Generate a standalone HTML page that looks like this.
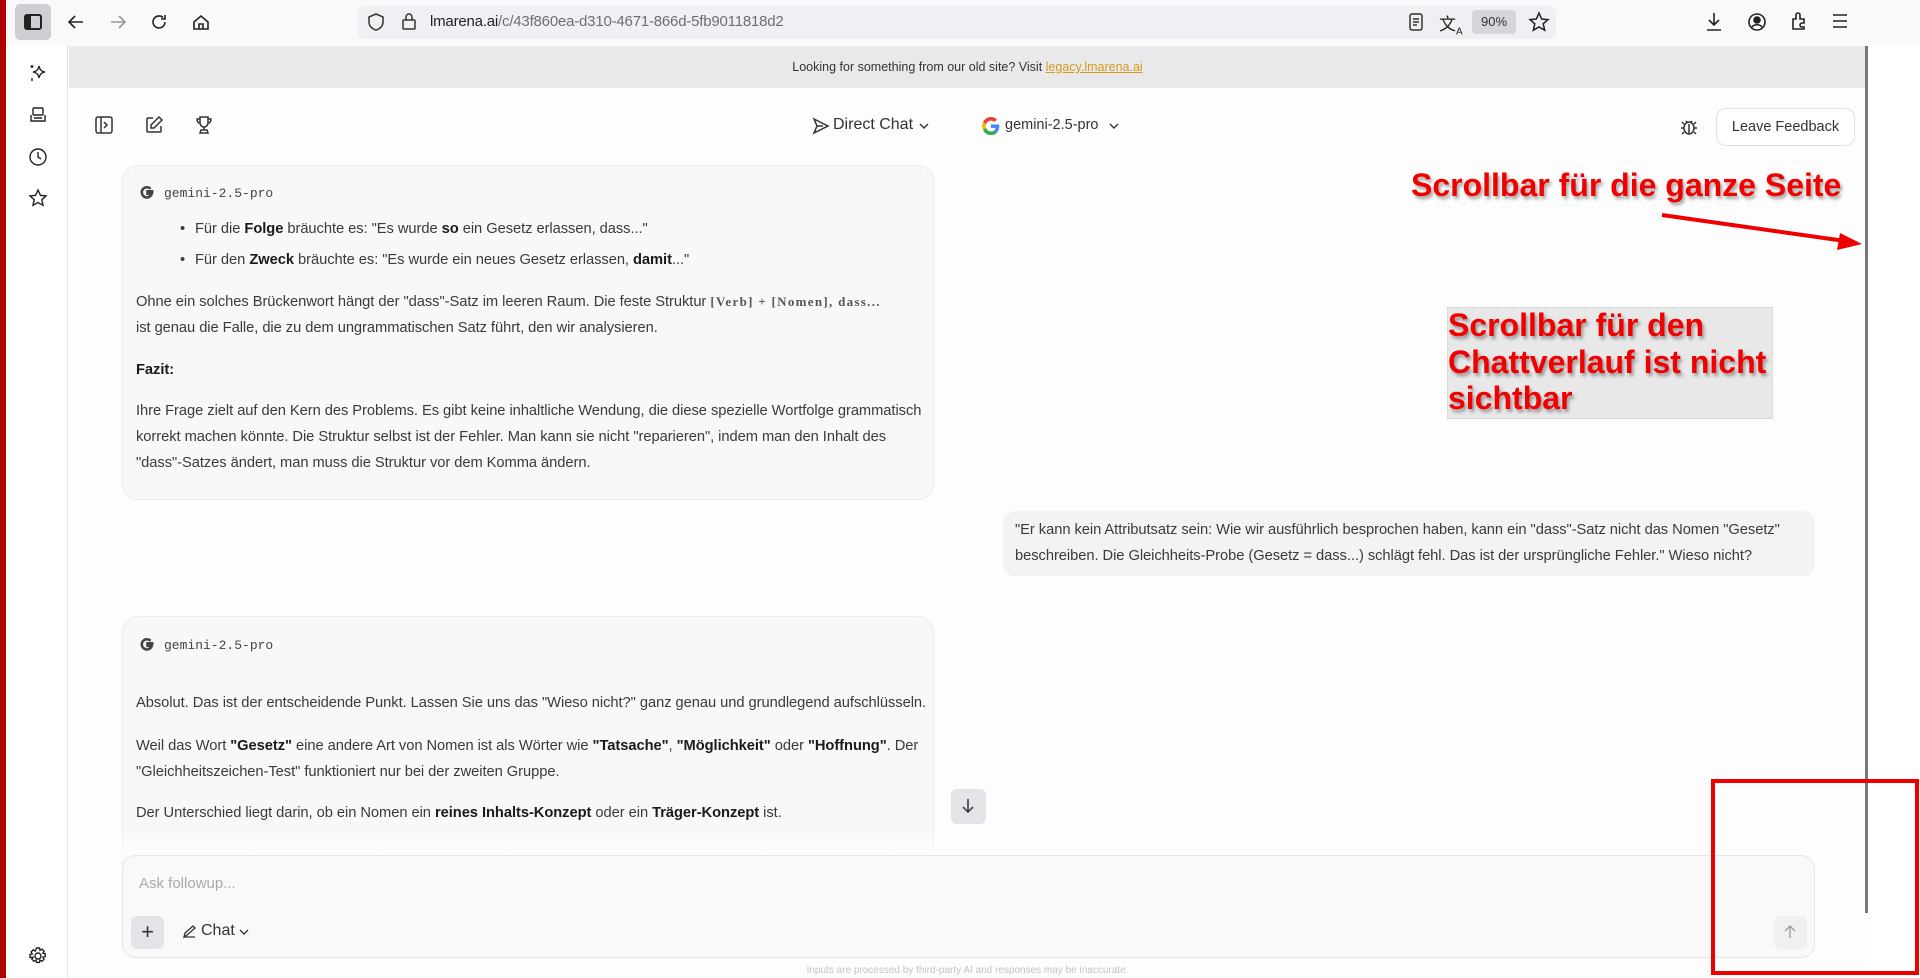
<!DOCTYPE html>
<html><head><meta charset="utf-8"><style>
*{box-sizing:border-box;margin:0;padding:0}
body{width:1920px;height:978px;overflow:hidden;background:#fff;font-family:"Liberation Sans",Arial,sans-serif;color:#333;position:relative}
.abs{position:absolute}
.tb{left:0;top:0;width:1920px;height:45px;background:#f9f9fb}
.addr{left:358px;top:6px;width:1198px;height:33px;background:#f0f0f4;border-radius:6px}
.url{left:430px;top:13px;font-size:15px;color:#222;letter-spacing:-.2px}
.url span{color:#6d6d75}
.red{left:0;top:0;width:6px;height:978px;background:#b00000}
.side{left:6px;top:45px;width:62px;height:933px;background:#fff;border-right:1px solid #e3e3e3}
.main{left:69px;top:46px;width:1797px;height:932px;background:#fdfdfd}
.banner{left:69px;top:46px;width:1797px;height:42px;background:#e9e9eb;font-size:12.5px;text-align:center;line-height:42px;color:#333}
.banner a{color:#d99a1a;text-decoration:underline}
.card{background:#f8f8f9;border:1px solid #ececee;border-radius:16px}
.txt{font-size:14.7px;line-height:26px;color:#3a3a3a;letter-spacing:-.05px}
.txt b{color:#1a1a1a}
.mono{font-family:"Liberation Mono",monospace;font-size:13px;color:#444}
.code{font-family:"Liberation Serif",serif;font-weight:bold;font-size:13px;color:#555;letter-spacing:1.3px}
.ann{color:#f20000;font-weight:bold;font-size:32px;text-shadow:2px 3px 3px rgba(0,0,0,.35);white-space:nowrap}
svg{position:absolute;overflow:visible}
</style></head><body>
<div class="abs tb"></div>
<div class="abs" style="left:15px;top:4px;width:36px;height:36px;background:#cfcfd3;border-radius:5px"></div>
<svg style="left:22px;top:11px" width="22" height="22" viewBox="0 0 22 22"><rect x="3" y="4" width="16" height="14" rx="2" fill="none" stroke="#222" stroke-width="2"/><rect x="4" y="5" width="5" height="12" fill="#222"/></svg>
<svg style="left:66px;top:12px" width="20" height="20" viewBox="0 0 20 20" fill="none" stroke="#222" stroke-width="1.6"><path d="M17 10H3M9 4l-6 6 6 6"/></svg>
<svg style="left:108px;top:12px" width="20" height="20" viewBox="0 0 20 20" fill="none" stroke="#999" stroke-width="1.6"><path d="M3 10h14M11 4l6 6-6 6"/></svg>
<svg style="left:149px;top:12px" width="20" height="20" viewBox="0 0 20 20" fill="none" stroke="#222" stroke-width="1.6"><path d="M16 10a6 6 0 1 1-2-4.5M16 3v4h-4"/></svg>
<svg style="left:191px;top:12px" width="20" height="20" viewBox="0 0 20 20" fill="none" stroke="#222" stroke-width="1.6"><path d="M3 10l7-6 7 6v7H3zM8 17v-5h4v5"/></svg>
<div class="abs addr"></div>
<svg style="left:367px;top:12px" width="18" height="20" viewBox="0 0 18 20" fill="none" stroke="#333" stroke-width="1.5"><path d="M9 2l7 3v5c0 4-3 7-7 8-4-1-7-4-7-8V5z"/></svg>
<svg style="left:401px;top:11px" width="16" height="20" viewBox="0 0 16 20" fill="none" stroke="#333" stroke-width="1.5"><rect x="2" y="9" width="12" height="9" rx="1"/><path d="M5 9V6a3 3 0 0 1 6 0v3"/></svg>
<div class="abs url">lmarena.ai<span>/c/43f860ea-d310-4671-866d-5fb9011818d2</span></div>
<svg style="left:1407px;top:12px" width="18" height="20" viewBox="0 0 18 20" fill="none" stroke="#333" stroke-width="1.5"><rect x="3" y="2" width="12" height="16" rx="2"/><path d="M6 7h6M6 10h6M6 13h4"/></svg>
<div class="abs" style="left:1439px;top:10px;font-size:17px;color:#222">文<sub style="font-size:10px">A</sub></div>
<div class="abs" style="left:1472px;top:10px;width:44px;height:24px;background:#d6d6da;border-radius:4px;font-size:13px;line-height:24px;text-align:center;color:#333">90%</div>
<svg style="left:1528px;top:11px" width="22" height="22" viewBox="0 0 22 22" fill="none" stroke="#222" stroke-width="1.5"><path d="M11 2l2.7 6 6.3.6-4.8 4.2 1.5 6.4L11 16l-5.7 3.2 1.5-6.4L2 8.6 8.3 8z"/></svg>
<svg style="left:1704px;top:11px" width="20" height="22" viewBox="0 0 20 22" fill="none" stroke="#222" stroke-width="1.6"><path d="M10 2v12M5 9l5 5 5-5M3 19h14"/></svg>
<svg style="left:1746px;top:11px" width="22" height="22" viewBox="0 0 22 22" fill="none" stroke="#222" stroke-width="1.6"><circle cx="11" cy="11" r="8"/><circle cx="11" cy="9" r="3" fill="#222"/><path d="M6 16c2-3 8-3 10 0"/></svg>
<svg style="left:1789px;top:10px" width="20" height="22" viewBox="0 0 20 22" fill="none" stroke="#222" stroke-width="1.6"><path d="M4 19V9h3V5a2 2 0 0 1 4 0v4h4v4h-2a2 2 0 0 0 0 4h2v2z"/></svg>
<svg style="left:1831px;top:13px" width="18" height="16" viewBox="0 0 18 16" fill="none" stroke="#222" stroke-width="1.6"><path d="M2 2h14M2 8h14M2 14h14"/></svg>

<div class="abs red"></div>
<div class="abs side"></div>
<svg style="left:28px;top:63px" width="20" height="20" viewBox="0 0 20 20" fill="none" stroke="#222" stroke-width="1.4"><path d="M11 3c1 4 2 5 6 6-4 1-5 2-6 6-1-4-2-5-6-6 4-1 5-2 6-6zM4 2v3M2.5 3.5h3M4 15v3"/></svg>
<svg style="left:28px;top:105px" width="20" height="20" viewBox="0 0 20 20" fill="none" stroke="#222" stroke-width="1.4"><rect x="5" y="3" width="10" height="7" rx="1"/><path d="M3 10v6h14v-6M6 13h8"/></svg>
<svg style="left:28px;top:147px" width="20" height="20" viewBox="0 0 20 20" fill="none" stroke="#222" stroke-width="1.4"><circle cx="10" cy="10" r="8"/><path d="M10 5v5l3 2"/></svg>
<svg style="left:28px;top:188px" width="20" height="20" viewBox="0 0 20 20" fill="none" stroke="#222" stroke-width="1.4"><path d="M10 2l2.4 5.3 5.6.6-4.2 3.8 1.2 5.6L10 14.5l-5 2.8 1.2-5.6L2 7.9l5.6-.6z"/></svg>
<svg style="left:28px;top:946px" width="20" height="20" viewBox="0 0 20 20" fill="none" stroke="#222" stroke-width="1.4"><circle cx="10" cy="10" r="3"/><path d="M8.5 2h3l.5 2.3 2-1.2 2.1 2.1-1.2 2 2.3.5v3l-2.3.5 1.2 2-2.1 2.1-2-1.2-.5 2.3h-3l-.5-2.3-2 1.2-2.1-2.1 1.2-2L2 11.5v-3l2.3-.5-1.2-2 2.1-2.1 2 1.2z"/></svg>

<div class="abs main"></div>
<div class="abs banner">Looking for something from our old site? Visit <a>legacy.lmarena.ai</a></div>

<svg style="left:94px;top:115px" width="20" height="20" viewBox="0 0 20 20" fill="none" stroke="#333" stroke-width="1.5"><rect x="2" y="2" width="16" height="16" rx="2"/><path d="M7 2v16M10 7l3 3-3 3"/></svg>
<svg style="left:144px;top:115px" width="20" height="20" viewBox="0 0 20 20" fill="none" stroke="#333" stroke-width="1.5"><path d="M9 3H4a1 1 0 0 0-1 1v12a1 1 0 0 0 1 1h12a1 1 0 0 0 1-1v-5M15 2l3 3-8 8H7v-3z"/></svg>
<svg style="left:194px;top:115px" width="20" height="20" viewBox="0 0 20 20" fill="none" stroke="#333" stroke-width="1.5"><path d="M6 2h8v6a4 4 0 0 1-8 0zM6 4H3c0 3 1 4 3 4M14 4h3c0 3-1 4-3 4M10 12v3M6 18h8l-1-3H7z"/></svg>
<svg style="left:812px;top:117px" width="18" height="18" viewBox="0 0 18 18" fill="none" stroke="#333" stroke-width="1.5"><path d="M2 2l14 7-14 7 3-7zM5 9h6"/></svg>
<div class="abs" style="left:833px;top:116px;font-size:16px;color:#333">Direct Chat</div>
<svg style="left:918px;top:121px" width="12" height="10" viewBox="0 0 12 10" fill="none" stroke="#333" stroke-width="1.4"><path d="M2 3l4 4 4-4"/></svg>
<svg style="left:982px;top:117px" width="18" height="18" viewBox="0 0 48 48"><path fill="#EA4335" d="M24 9.5c3.5 0 6.6 1.2 9.1 3.6l6.8-6.8C35.8 2.4 30.3 0 24 0 14.6 0 6.6 5.4 2.7 13.3l7.9 6.1C12.5 13.6 17.8 9.5 24 9.5z"/><path fill="#4285F4" d="M46.1 24.5c0-1.6-.1-3.1-.4-4.5H24v9h12.4c-.5 2.9-2.2 5.4-4.6 7l7.4 5.8c4.3-4 6.9-9.9 6.9-17.3z"/><path fill="#FBBC05" d="M10.5 28.6c-.5-1.4-.8-3-.8-4.6s.3-3.2.8-4.6l-7.9-6.1C1 16.6 0 20.2 0 24s.9 7.4 2.6 10.7z"/><path fill="#34A853" d="M24 48c6.5 0 11.9-2.1 15.9-5.8l-7.4-5.8c-2.1 1.4-4.8 2.300-8.5 2.3-6.2 0-11.5-4.2-13.4-9.9l-7.9 6.1C6.6 42.6 14.6 48 24 48z"/></svg>
<div class="abs" style="left:1005px;top:117px;font-size:14.5px;color:#333">gemini-2.5-pro</div>
<svg style="left:1108px;top:121px" width="12" height="10" viewBox="0 0 12 10" fill="none" stroke="#333" stroke-width="1.4"><path d="M2 3l4 4 4-4"/></svg>
<svg style="left:1679px;top:116px" width="20" height="20" viewBox="0 0 20 20" fill="none" stroke="#333" stroke-width="1.5"><ellipse cx="10" cy="12" rx="5" ry="6"/><path d="M7 5l1.5 2M13 5l-1.5 2M10 8v10M5 12H2M18 12h-3M5 8L3 6M15 8l2-2M5 16l-2 2M15 16l2 2"/></svg>
<div class="abs" style="left:1716px;top:108px;width:139px;height:38px;border:1px solid #e2e2e4;border-radius:10px;background:#fff;font-size:14.5px;line-height:36px;text-align:center;color:#333">Leave Feedback</div>

<!-- card 1 -->
<div class="abs card" style="left:122px;top:165px;width:812px;height:335px"></div>
<svg style="left:139px;top:184px" width="17" height="18" viewBox="0 0 20 20" fill="none" stroke="#444" stroke-width="3"><path d="M17 8H10v3h5a6 6 0 1 1-1.5-6"/></svg>
<div class="abs mono" style="left:164px;top:186px">gemini-2.5-pro</div>
<div class="abs txt" style="left:180px;top:216px">•</div>
<div class="abs txt" style="left:195px;top:216px">Für die <b>Folge</b> bräuchte es: "Es wurde <b>so</b> ein Gesetz erlassen, dass..."</div>
<div class="abs txt" style="left:180px;top:247px">•</div>
<div class="abs txt" style="left:195px;top:247px">Für den <b>Zweck</b> bräuchte es: "Es wurde ein neues Gesetz erlassen, <b>damit</b>..."</div>
<div class="abs txt" style="left:136px;top:289px;white-space:nowrap">Ohne ein solches Brückenwort hängt der "dass"-Satz im leeren Raum. Die feste Struktur <span class="code">[Verb] + [Nomen], dass...</span></div>
<div class="abs txt" style="left:136px;top:315px">ist genau die Falle, die zu dem ungrammatischen Satz führt, den wir analysieren.</div>
<div class="abs txt" style="left:136px;top:357px"><b>Fazit:</b></div>
<div class="abs txt" style="left:136px;top:398px;white-space:nowrap">Ihre Frage zielt auf den Kern des Problems. Es gibt keine inhaltliche Wendung, die diese spezielle Wortfolge grammatisch<br>korrekt machen könnte. Die Struktur selbst ist der Fehler. Man kann sie nicht "reparieren", indem man den Inhalt des<br>"dass"-Satzes ändert, man muss die Struktur vor dem Komma ändern.</div>

<!-- user msg -->
<div class="abs" style="left:1003px;top:511px;width:812px;height:65px;background:#f3f3f4;border-radius:12px"></div>
<div class="abs txt" style="left:1015px;top:517px;white-space:nowrap">"Er kann kein Attributsatz sein: Wie wir ausführlich besprochen haben, kann ein "dass"-Satz nicht das Nomen "Gesetz"<br>beschreiben. Die Gleichheits-Probe (Gesetz = dass...) schlägt fehl. Das ist der ursprüngliche Fehler." Wieso nicht?</div>

<!-- card 2 -->
<div class="abs card" style="left:122px;top:616px;width:812px;height:330px;border-bottom:none;border-radius:16px 16px 0 0"></div>
<svg style="left:139px;top:636px" width="17" height="18" viewBox="0 0 20 20" fill="none" stroke="#444" stroke-width="3"><path d="M17 8H10v3h5a6 6 0 1 1-1.5-6"/></svg>
<div class="abs mono" style="left:164px;top:638px">gemini-2.5-pro</div>
<div class="abs txt" style="left:136px;top:690px">Absolut. Das ist der entscheidende Punkt. Lassen Sie uns das "Wieso nicht?" ganz genau und grundlegend aufschlüsseln.</div>
<div class="abs txt" style="left:136px;top:733px;white-space:nowrap">Weil das Wort <b>"Gesetz"</b> eine andere Art von Nomen ist als Wörter wie <b>"Tatsache"</b>, <b>"Möglichkeit"</b> oder <b>"Hoffnung"</b>. Der<br>"Gleichheitszeichen-Test" funktioniert nur bei der zweiten Gruppe.</div>
<div class="abs txt" style="left:136px;top:800px">Der Unterschied liegt darin, ob ein Nomen ein <b>reines Inhalts-Konzept</b> oder ein <b>Träger-Konzept</b> ist.</div>
<div class="abs" style="left:69px;top:830px;width:1797px;height:30px;background:linear-gradient(rgba(253,253,253,0),#fdfdfd)"></div>
<div class="abs" style="left:951px;top:789px;width:35px;height:35px;background:#e3e4e8;border-radius:6px"></div>
<svg style="left:959px;top:797px" width="18" height="18" viewBox="0 0 18 18" fill="none" stroke="#333" stroke-width="1.5"><path d="M9 2v13M4 10l5 5 5-5"/></svg>

<!-- input -->
<div class="abs" style="left:122px;top:855px;width:1693px;height:103px;background:#f9f9fa;border:1px solid #e6e6e8;border-radius:14px"></div>
<div class="abs" style="left:139px;top:875px;font-size:15px;color:#aaa">Ask followup...</div>
<div class="abs" style="left:131px;top:916px;width:33px;height:33px;background:#e3e4e8;border-radius:6px;text-align:center;line-height:31px;font-size:22px;color:#333">+</div>
<svg style="left:182px;top:924px" width="15" height="15" viewBox="0 0 15 15" fill="none" stroke="#333" stroke-width="1.3"><path d="M2 13l1-4 8-7 2 2-8 7zM2 13h11"/></svg>
<div class="abs" style="left:201px;top:922px;font-size:16px;color:#333">Chat</div>
<svg style="left:238px;top:927px" width="12" height="10" viewBox="0 0 12 10" fill="none" stroke="#333" stroke-width="1.4"><path d="M2 3l4 4 4-4"/></svg>
<div class="abs" style="left:1774px;top:916px;width:33px;height:33px;background:#f0f0f2;border-radius:6px"></div>
<svg style="left:1782px;top:924px" width="16" height="16" viewBox="0 0 16 16" fill="none" stroke="#999" stroke-width="1.3"><path d="M8 14V2M3 7l5-5 5 5"/></svg>
<div class="abs" style="left:69px;top:965px;width:1797px;text-align:center;font-size:10px;color:#c4c4c8">Inputs are processed by third-party AI and responses may be inaccurate.</div>

<!-- page scrollbar -->
<div class="abs" style="left:1866px;top:46px;width:54px;height:932px;background:#fff"></div>
<div class="abs" style="left:1865px;top:46px;width:3px;height:867px;background:#777"></div>

<!-- annotations -->
<div class="abs ann" style="left:1411px;top:167px">Scrollbar für die ganze Seite</div>
<svg style="left:0;top:0" width="1920" height="978"><line x1="1662" y1="215" x2="1845" y2="241" stroke="#ee0000" stroke-width="4"/><path d="M1862 244l-22-11 -3 17z" fill="#ee0000"/></svg>
<div class="abs" style="left:1447px;top:307px;width:326px;height:112px;background:#e8e8e8;border:1px dotted #ccc"></div>
<div class="abs ann" style="left:1448px;top:307px;line-height:36.5px">Scrollbar für den<br>Chattverlauf ist nicht<br>sichtbar</div>
<div class="abs" style="left:1711px;top:779px;width:208px;height:196px;border:4px solid #ee0000"></div>
</body></html>
